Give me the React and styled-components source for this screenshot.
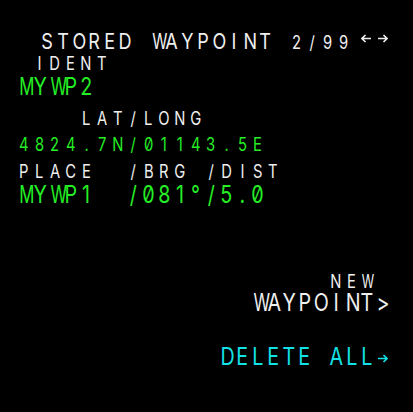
import React from 'react';
import styled, { createGlobalStyle } from 'styled-components';

const CELL = 15.6;

const colors = {
  white: '#efefef',
  green: '#25ee25',
  cyan: '#12e2e6',
};

const sizes = {
  title: 22,
  small: 18,
  large: 24,
};

// the MCDU font is narrow and even, so squeeze the wide letters harder
const WIDE = 'MW';

const GlobalStyle = createGlobalStyle`
  html, body {
    margin: 0;
    padding: 0;
    background: #000000;
  }
`;

const Screen = styled.div`
  width: 413px;
  height: 412px;
  box-sizing: border-box;
  background: #000000;
  padding: 28px 0 0 16px;
  display: flex;
  flex-direction: column;
  font-family: Inter, 'DejaVu Sans', sans-serif;
  font-weight: 400;
  font-feature-settings: 'zero' 1;
  overflow: hidden;
`;

const Row = styled.div`
  display: flex;
  align-items: ${(p) => (p.$baseline ? 'baseline' : 'center')};
  height: 24px;
  flex: none;
  margin-top: ${(p) => p.$gap || 0}px;
`;

const Pad = styled.span`
  flex: none;
  width: ${(p) => p.$cols * CELL}px;
`;

const Cell = styled.span`
  flex: none;
  width: ${CELL}px;
  display: inline-block;
  text-align: center;
  font-size: ${(p) => sizes[p.$size]}px;
  line-height: 1.2;
  color: ${(p) => colors[p.$color]};
`;

const Glyph = styled.span`
  display: inline-block;
  transform: scaleX(${(p) => (p.$wide ? 0.7 : 0.82)});
`;

const ArrowCell = styled.span`
  flex: none;
  width: ${CELL}px;
  height: 24px;
  display: flex;
  align-items: center;
  justify-content: center;
  align-self: center;
  color: ${(p) => colors[p.$color]};
`;

function Text({ children, size = 'small', color = 'white' }) {
  return children.split('').map((ch, i) => (
    <Cell key={i} $size={size} $color={color}>
      {ch === ' ' ? '\u00a0' : <Glyph $wide={WIDE.includes(ch)}>{ch}</Glyph>}
    </Cell>
  ));
}

function Arrow({ dir = 'right', color = 'white', nudge = 0 }) {
  const d = dir === 'right' ? 'M1 4.5 H10 M6.5 1 L10 4.5 L6.5 8' : 'M10 4.5 H1 M4.5 1 L1 4.5 L4.5 8';
  return (
    <ArrowCell $color={color}>
      <svg width="11" height="9" viewBox="0 0 11 9" style={{ marginTop: nudge }}>
        <path d={d} fill="none" stroke="currentColor" strokeWidth="1.6" />
      </svg>
    </ArrowCell>
  );
}

export default function App() {
  return (
    <>
      <GlobalStyle />
      <Screen>
        <Row $baseline>
          <Pad $cols={1.5} />
          <Text size="title">STORED WAYPOINT</Text>
          <Text> 2/99</Text>
          <Pad $cols={0.5} />
          <Arrow dir="left" nudge={-3} />
          <Arrow dir="right" nudge={-3} />
        </Row>

        <Row $gap={-0.5}>
          <Pad $cols={1} />
          <Text>IDENT</Text>
        </Row>
        <Row $gap={-0.5}>
          <Text size="large" color="green">MYWP2</Text>
        </Row>

        <Row $gap={8}>
          <Pad $cols={4} />
          <Text>LAT/LONG</Text>
        </Row>
        <Row $gap={1.5}>
          <Text color="green">4824.7N/01143.5E</Text>
        </Row>

        <Row $gap={3}>
          <Text>PLACE  /BRG /DIST</Text>
        </Row>
        <Row $gap={0}>
          <Text size="large" color="green">MYWP1  /081°/5.0</Text>
        </Row>

        <Row $gap={4.5} />
        <Row $gap={2} />

        <Row $gap={8}>
          <Pad $cols={20} />
          <Text>NEW</Text>
        </Row>
        <Row $gap={-2.5}>
          <Pad $cols={15} />
          <Text size="large">WAYPOINT&gt;</Text>
        </Row>

        <Row $gap={2.5} />
        <Row $gap={3}>
          <Pad $cols={13} />
          <Text size="large" color="cyan">DELETE ALL</Text>
          <Arrow color="cyan" nudge={2} />
        </Row>
      </Screen>
    </>
  );
}
